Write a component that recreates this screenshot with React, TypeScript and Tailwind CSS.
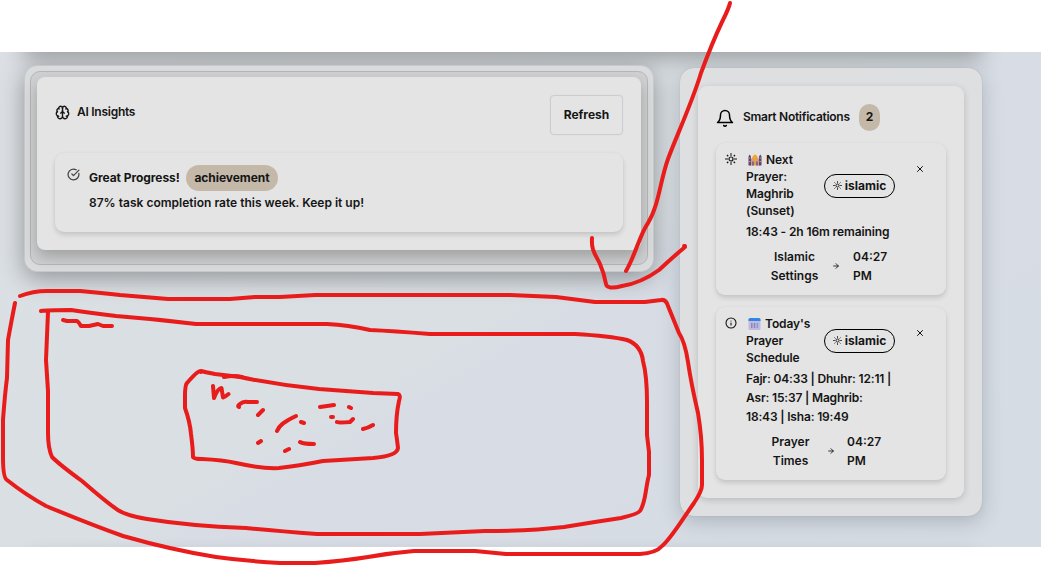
import React from "react";
import { Brain, CircleCheckBig, Info, ArrowRight, X } from "lucide-react";

type LineProps = { children: React.ReactNode; className?: string };

function Line({ children, className = "" }: LineProps) {
  return <span className={`block w-max whitespace-nowrap ${className}`}>{children}</span>;
}

function SunGlyph({ size }: { size: number }) {
  return (
    <svg width={size} height={size} viewBox="0 0 24 24" fill="none" stroke="currentColor" strokeWidth="2" className="shrink-0">
      <circle cx="12" cy="12" r="4" strokeWidth="2.4" />
      <path d="M12 0v6M12 18v6M0 12h6M18 12h6" />
      <path d="m4 4 2.500 2.500M17.500 17.500 20 20M20 4l-2.500 2.500M6.500 17.500 4 20" strokeWidth="2.5" />
    </svg>
  );
}

function BellGlyph() {
  return (
    <svg width="18" height="18" viewBox="0 0 24 24" fill="none" stroke="#000" strokeWidth="2" strokeLinecap="round" strokeLinejoin="round" className="shrink-0">
      <path d="M6 8a6 6 0 0 1 12 0c0 7 4 10 4 10H2s4-3 4-10" />
      <path d="M10.300 22a2 2 0 0 0 3.400 0" />
    </svg>
  );
}

function Mosque() {
  return (
    <svg width="14" height="12" viewBox="0 0 14 12" className="ml-[2px] shrink-0">
      <path d="M3.500 5Q4 2 7 .3Q10 2 10.500 5Z" fill="#f0a52e" />
      <rect x="2" y="4.500" width="10" height="7" fill="#dda05f" />
      <path d="M.5 11.500V2.500L1.700.500L3 2.500V11.500ZM11 11.500V2.500L12.300.500L13.500 2.500V11.500Z" fill="#5a4573" />
      <path d="M4 11.500V8Q4.800 6.500 5.600 8V11.500ZM8.400 11.500V8Q9.200 6.500 10 8V11.500Z" fill="#5a4573" />
      <path d="M3 6h1.200v5.500M11 6H9.800v5.500" stroke="#b8a0c8" strokeWidth=".6" fill="none" />
      <path d="M1.300 4h1M11.700 4h1M1.300 7.500h1M11.700 7.500h1" stroke="#d9c5e0" />
    </svg>
  );
}

function CalendarGlyph() {
  return (
    <svg width="13" height="12" viewBox="0 0 13 12" className="ml-[2px] shrink-0">
      <rect x=".5" y=".5" width="12" height="11.500" rx="1.500" fill="#c5b8dd" />
      <path d="M2 0h9q1.500 0 1.500 1.500V3H.5V1.500Q.5 0 2 0" fill="#2f86e5" />
      <path d="M3 5h1.500v5H3ZM5.800 5h1.500v5H5.800Z" fill="#8f84b5" />
      <path d="M8.600 5h1.500v5H8.600Z" fill="#67a6e6" />
    </svg>
  );
}

type NoticeProps = {
  icon: React.ReactNode;
  glyph: React.ReactNode;
  title: string[];
  body: string[];
  bodyClass: string;
  action: string[];
  actionClass: string;
  pillClass: string;
  className: string;
};

function Notice({ icon, glyph, title, body, bodyClass, action, actionClass, pillClass, className }: NoticeProps) {
  return (
    <article className={`flex w-[230px] rounded-[9px] bg-[#e4e4e4] pl-[9px] shadow-[0_3px_5px_rgba(0,0,0,0.13),0_0_3px_rgba(0,0,0,0.04)] ${className}`}>
      <div className="mt-[10px] w-[21px] shrink-0">{icon}</div>
      <div className="w-[150px] shrink-0 pt-2">
        <div className="flex items-center">
          <div className="w-[78px] shrink-0 leading-[17px] tracking-[-0.1px]">
            {title.map((text, i) => (
              <Line key={text}>
                {i === 0 ? <span className="flex items-center gap-[4px]">{glyph}{text}</span> : text}
              </Line>
            ))}
          </div>
          <div className={`flex h-6 w-[71px] shrink-0 items-center justify-center gap-[3px] rounded-full border border-black pb-px font-bold ${pillClass}`}>
            <SunGlyph size={9} />
            <span>islamic</span>
          </div>
        </div>
        <div className={`mt-[3px] leading-[19px] ${bodyClass}`}>
          {body.map((text) => <Line key={text}>{text}</Line>)}
        </div>
        <div className={`mt-[6px] flex items-center leading-[19px] ${actionClass}`}>
          <div className="w-[49px] text-center">{action.map((text) => <div key={text}>{text}</div>)}</div>
          <div className="flex flex-1 justify-center"><ArrowRight size={8} strokeWidth={2.6} /></div>
          <div className="w-[42px]"><div>04:27</div><div>PM</div></div>
        </div>
      </div>
      <X size={10} strokeWidth={2.4} className="mt-[21px] ml-[19px] shrink-0" />
    </article>
  );
}

function Annotations() {
  return (
    <svg width="1041" height="566" viewBox="0 0 1041 566" className="pointer-events-none absolute inset-0" fill="none" stroke="#e91c1c" strokeWidth="4" strokeLinecap="round" strokeLinejoin="round">
      <path d="M730 3Q729 8 722 22Q712 43 701 73C692 103 676 137 668 159C660 181 659 205 648 223C640 234 635 256 626 271" />
      <path d="M592 238C591 251 596 255 600 264Q604 273 606 284Q607 290 622 286Q641 283 659 270Q673 257 685 247M684 246h1" />
      <path d="M20 296Q33 291 47 291H80Q102 293 120 295L168 299H230L255 297H280L315 295H510L556 297L595 302H645L661 300Q666 299 668 306L679 333Q685 342 688 362Q691 383 698 413Q702 437 702 460V485Q702 491 694 503C682 520 670 540 662 546Q656 553 640 554H506L475 551H414Q390 553 368 557Q343 561 315 563H280Q245 561 216 557Q172 550 123 536Q92 525 46 506Q26 495 7 480Q3 478 3 457V420Q5 393 7 378L8 340Q12 318 15 303" />
      <path d="M41 311Q46 310 71 310Q91 313 116 316Q155 319 196 324H327Q348 325 370 330Q393 331 430 334H575Q610 336 627 340Q641 345 643 361Q647 376 647 402V435L649 452V475C645 490 646 502 640 511Q638 514 621 518Q594 522 564 527Q530 531 485 531Q440 533 420 534H317Q277 531 246 528Q190 526 147 519Q123 515 115 508Q105 501 82 481Q60 465 52 457Q48 448 48 433V391L46 360L48 312" />
      <path d="M63 320L67 321H77Q79 322 81 326H89L98 324L103 326H112" />
      <path d="M201 372Q200 368 187 383Q185 385 185 396V408Q190 422 191 434Q193 449 193 457Q194 459 202 459Q223 460 236 463Q263 469 279 468Q298 466 323 461L373 458Q397 456 398 448Q397 439 396 433Q396 415 399 401Q401 395 398 394L373 393L319 389Q278 385 240 377L215 374Q204 372 201 371" />
      <path d="M224 377Q234 375 242 377M213 386L214 398Q218 388 221.500 388L223 397.500Q225 397 228.500 394M239 407Q237 406 240 404Q243 401 248 402H257M258 415L263 410M277 431C279 426 283 422 296 416M301 422L304 423M258 443L261 441M285 451L289 449M300 442Q303 444 314 444M320 407L334 405M349 407L351 408M331 417H333M337 422Q339 423 350 422L353 419M363 429Q368 428 373 425" />
    </svg>
  );
}

export default function App() {
  return (
    <div className="relative h-[566px] w-[1041px] overflow-hidden bg-white pt-[52px] font-['Inter','Liberation_Sans',sans-serif] text-[12px] font-semibold text-[#151515]">
      <main className="relative flex h-[495px] items-start overflow-hidden bg-[linear-gradient(150deg,#dce0e4_0%,#d9dfe3_50%,#d8dde5_54%,#d6dce4_100%)] pl-6">
        <div className="absolute -top-10 left-6 h-10 w-[958px] shadow-[0_6px_22px_rgba(0,0,0,0.3)]" />
        <div className="absolute -bottom-[50px] left-6 h-10 w-[958px] rounded-[13px] shadow-[0_2px_20px_rgba(0,0,0,0.3)]" />
        <section className="relative mt-[13px] h-[207px] w-[630px] rounded-[13px] border border-[#c6c8ca] bg-[#dadbdc] p-[5px] shadow-[0_6px_24px_rgba(0,0,0,0.34)]">
          <div className="h-[194px] rounded-[10px] border border-[#b6b7b8] bg-[#d0d1d2] p-[5px] pl-[6px]">
            <div className="h-[173px] w-[604px] rounded-[8px] bg-[#e4e4e4] px-[18px] pt-[18px] shadow-[0_7px_15px_rgba(0,0,0,0.24)]">
              <header className="flex items-start justify-between">
                <div className="mt-[8px] flex items-center gap-[7px]">
                  <Brain size={15} strokeWidth={2.2} className="mt-px" />
                  <span className="tracking-[-0.26px]">AI Insights</span>
                </div>
                <button className="h-10 w-[73px] rounded-[4px] border border-[#cacdd1] pb-px font-bold shadow-[0_0_1px_#c5c9ce]">Refresh</button>
              </header>
              <div className="mt-[18px] flex h-[79px] w-[568px] rounded-[9px] bg-[#e4e4e4] pl-3 shadow-[0_3px_5px_rgba(0,0,0,0.13),0_0_3px_rgba(0,0,0,0.04)]">
                <CircleCheckBig size={13} strokeWidth={2.3} className="mt-[15px] text-[#444]" />
                <div className="ml-[9px] pt-3">
                  <div className="flex items-center gap-[6px]">
                    <span className="w-[91px] whitespace-nowrap font-bold tracking-[-0.06px]">Great Progress!</span>
                    <span className="flex h-[26px] w-[92px] items-center justify-center rounded-full bg-[#c4b8a9] pb-px font-bold tracking-[-0.06px]">achievement</span>
                  </div>
                  <Line className="mt-[3px] tracking-[0.01px]">87% task completion rate this week. Keep it up!</Line>
                </div>
              </div>
            </div>
          </div>
        </section>
        <aside className="relative mt-4 ml-[26px] h-[448px] w-[302px] rounded-[14px] bg-[#dedfe0] px-[18px] pt-[18px] shadow-[0_5px_20px_rgba(40,50,65,0.25),0_0_1px_#aaa]">
          <div className="h-[412px] w-[266px] rounded-[9px] bg-[#e4e4e4] px-[18px] pt-[18px] shadow-[0_2px_7px_rgba(0,0,0,0.17)]">
            <header className="flex h-[27px] items-center">
              <BellGlyph />
              <span className="ml-[9px] w-[107px] whitespace-nowrap pb-px tracking-[-0.28px]">Smart Notifications</span>
              <span className="ml-[9px] flex h-[27px] w-[21px] items-center justify-center rounded-full bg-[#c4b8a9] pb-px font-bold">2</span>
            </header>
            <Notice className="mt-[12px] h-[152px]" pillClass="mt-[2px]" icon={<SunGlyph size={12} />} glyph={<Mosque />} title={["Next", "Prayer:", "Maghrib", "(Sunset)"]} body={["18:43 - 2h 16m remaining"]} bodyClass="tracking-[-0.11px]" action={["Islamic", "Settings"]} actionClass="ml-[24px] mr-px" />
            <Notice className="mt-[12px] h-[173px]" pillClass="mt-px" icon={<Info size={12} strokeWidth={2.2} />} glyph={<CalendarGlyph />} title={["Today's", "Prayer", "Schedule"]} body={["Fajr: 04:33 | Dhuhr: 12:11 |", "Asr: 15:37 | Maghrib:", "18:43 | Isha: 19:49"]} bodyClass="tracking-[-0.17px]" action={["Prayer", "Times"]} actionClass="ml-[20px] mr-[7px]" />
          </div>
        </aside>
      </main>
      <Annotations />
    </div>
  );
}
